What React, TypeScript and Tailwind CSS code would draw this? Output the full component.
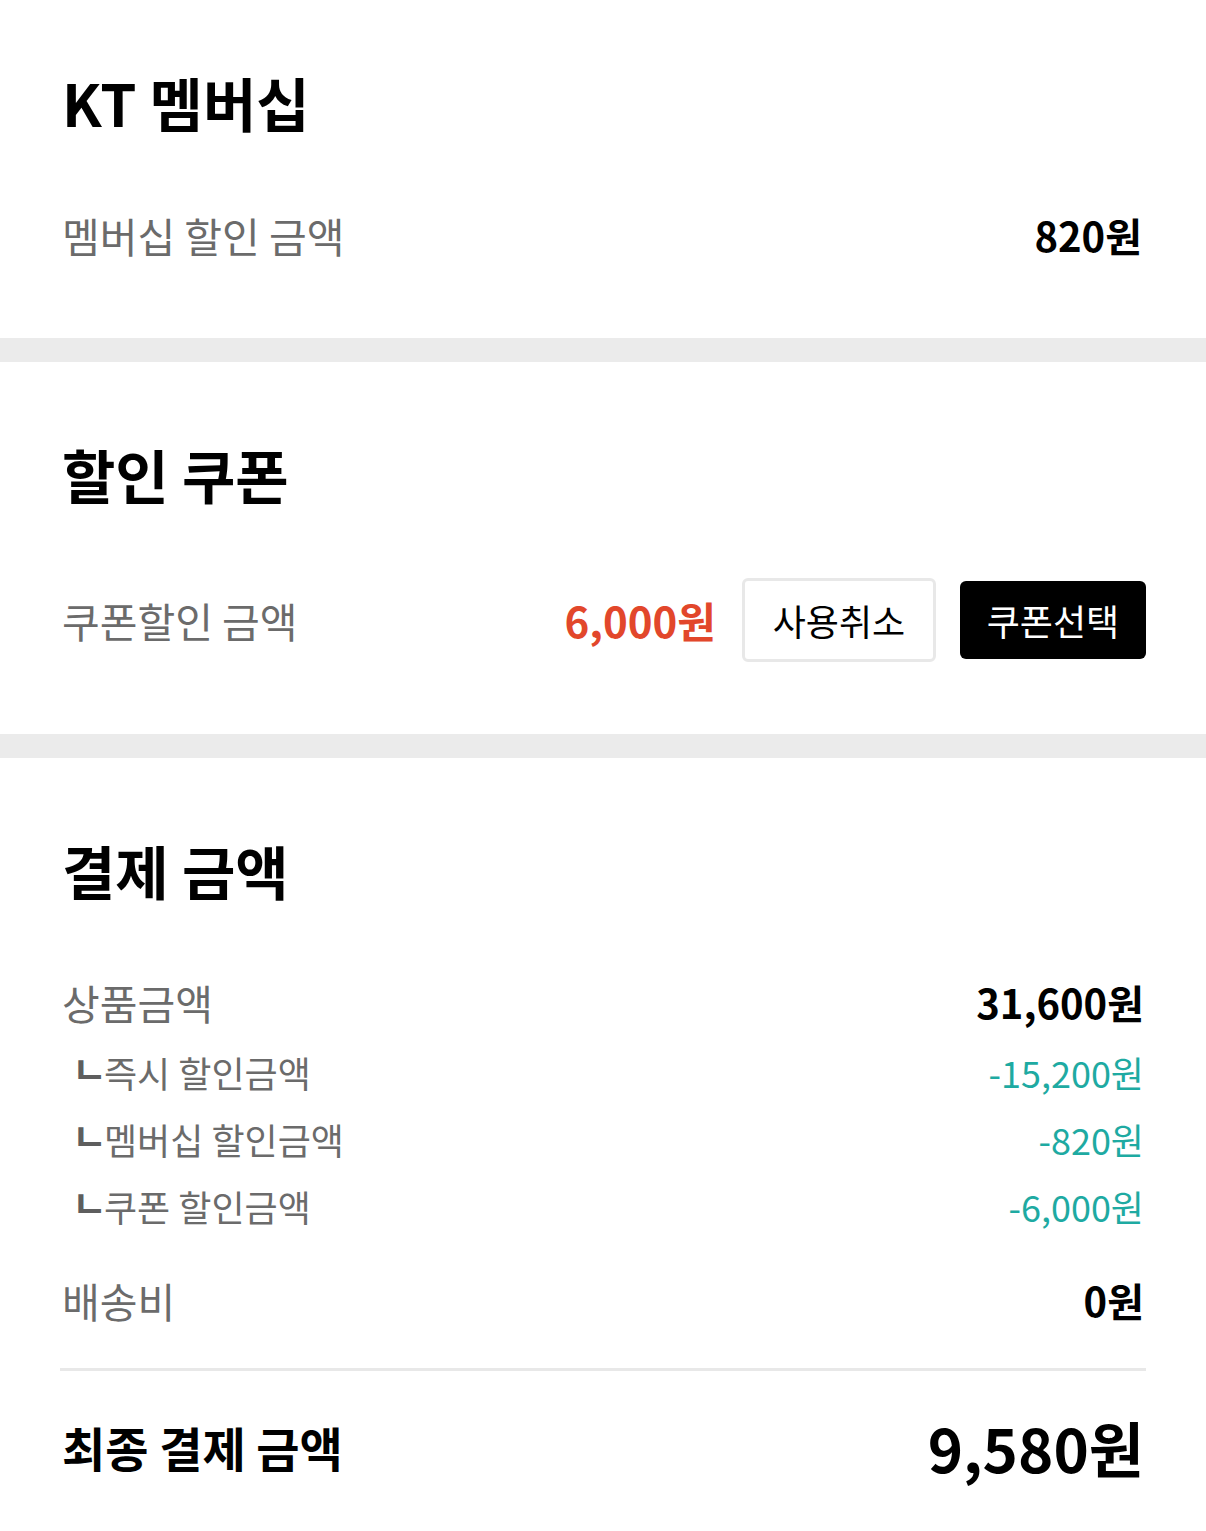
const font = { fontFamily: '"Noto Sans CJK KR", "Noto Sans", sans-serif' };

const discounts = [
  { label: "즉시 할인금액", value: "-15,200원" },
  { label: "멤버십 할인금액", value: "-820원" },
  { label: "쿠폰 할인금액", value: "-6,000원" },
];

function Divider() {
  return <div className="h-[24px] bg-[#ebebeb]" />;
}

export default function App() {
  return (
    <div className="w-[1206px] min-h-[1531px] bg-white" style={font}>
      {/* KT membership */}
      <section className="h-[338px] px-[62px] pt-[64px]">
        <h2 className="text-[58px] font-bold leading-[76px] text-black">KT 멤버십</h2>
        <div className="mt-[65px] flex items-center justify-between">
          <span className="text-[41px] leading-[60px] text-[#6b6b6b]">멤버십 할인 금액</span>
          <span className="pr-[2px] text-[40px] font-bold leading-[60px] text-black">820원</span>
        </div>
      </section>

      <Divider />

      {/* coupon */}
      <section className="h-[372px] px-[60px] pt-[74px]">
        <h2 className="pl-[2px] text-[58px] font-bold leading-[76px] text-black">할인 쿠폰</h2>
        <div className="mt-[66px] flex items-center">
          <span className="pl-[2px] text-[41px] leading-[60px] text-[#6b6b6b]">쿠폰할인 금액</span>
          <span className="ml-auto text-[42px] font-bold leading-[60px] text-[#e2472b]">6,000원</span>
          <button className="ml-[26px] h-[84px] w-[194px] rounded-[6px] border-[3px] border-[#e8e8e8] bg-white text-[36px] text-black">
            사용취소
          </button>
          <button className="ml-[24px] h-[78px] w-[186px] rounded-[6px] bg-black text-[36px] text-white">
            쿠폰선택
          </button>
        </div>
      </section>

      <Divider />

      {/* payment */}
      <section className="px-[60px] pt-[74px] pb-[40px]">
        <h2 className="pl-[2px] text-[58px] font-bold leading-[76px] text-black">결제 금액</h2>
        <div className="mt-[64px] flex items-center justify-between">
          <span className="pl-[2px] text-[41px] leading-[60px] text-[#6b6b6b]">상품금액</span>
          <span className="pr-[2px] text-[40px] font-bold leading-[60px] text-black">31,600원</span>
        </div>
        <div className="mt-[14px] flex flex-col gap-[15px]">
          {discounts.map(d => (
            <div key={d.label} className="flex items-center justify-between">
              <span className="flex items-center pl-[12px] text-[36px] leading-[52px] text-[#6b6b6b]">
                <span className="-mt-[8px] text-[38px] leading-[52px] font-semibold text-[#5e5e5e]">ㄴ</span>
                <span className="-ml-[3px]">{d.label}</span>
              </span>
              <span className="pr-[2px] text-[36px] leading-[52px] text-[#1eaaa2]">{d.value}</span>
            </div>
          ))}
        </div>
        <div className="mt-[38px] flex items-center justify-between">
          <span className="pl-[2px] text-[41px] leading-[60px] text-[#6b6b6b]">배송비</span>
          <span className="pr-[2px] text-[40px] font-bold leading-[60px] text-black">0원</span>
        </div>
        <div className="mt-[38px] h-[3px] bg-[#e8e8e8]" />
        <div className="mt-[36px] flex items-center justify-between">
          <span className="pl-[2px] text-[47px] font-bold leading-[80px] text-black">최종 결제 금액</span>
          <span className="pr-[2px] text-[60px] font-bold leading-[80px] text-black">9,580원</span>
        </div>
      </section>
    </div>
  );
}
